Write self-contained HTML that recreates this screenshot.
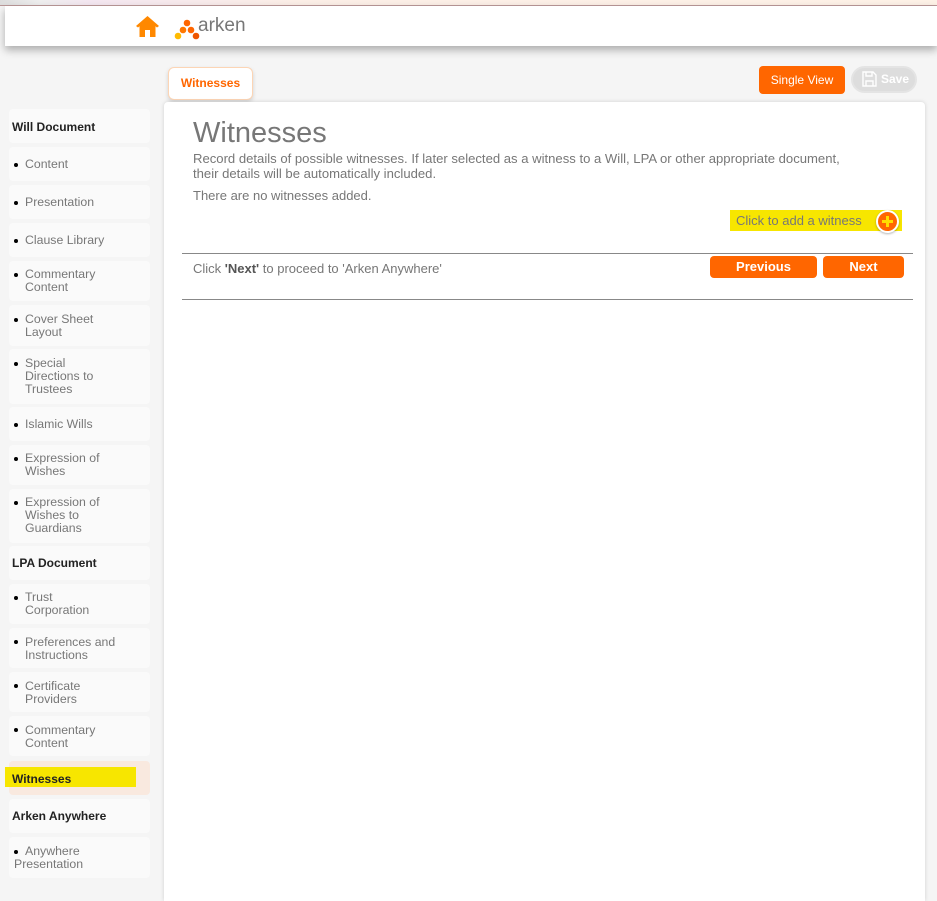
<!DOCTYPE html>
<html><head><meta charset="utf-8"><style>
*{margin:0;padding:0;box-sizing:border-box}
html,body{width:937px;height:901px;overflow:hidden}
body{background:#f5f5f5;font-family:"Liberation Sans",Arial,sans-serif;position:relative}
.strip{position:absolute;left:0;top:0;width:937px;height:6px;background:linear-gradient(90deg,#ddd 0,#eee 40px,#f3e6f0 90px,#fbeee6 300px,#fdf1e6 937px);border-bottom:1px solid #b99}
.hdr{position:absolute;left:5px;top:6px;width:932px;height:40px;background:#fff;box-shadow:0 4px 8px rgba(0,0,0,.3)}
.it{position:absolute;left:9px;width:141px;background:#fafafa;border-radius:4px;font-size:12.3px;color:#777;line-height:13px}
.it b{color:#222;position:absolute;left:3px;font-size:12px}
.it .t{position:absolute;left:16px}
.it .d{position:absolute;left:5px;width:4px;height:4px;border-radius:2px;background:#000}
.panel{position:absolute;left:164px;top:102px;width:761px;height:799px;background:#fff;border-radius:4px 4px 0 0;box-shadow:0 0 4px rgba(0,0,0,.15)}
.btn{position:absolute;background:#f60;color:#fff;border-radius:4px;font-size:13px;font-weight:bold;text-align:center}
</style></head><body>
<div class="strip"></div>
<div class="hdr">
<svg style="position:absolute;left:130px;top:8px" width="25" height="24" viewBox="0 0 25 24"><path d="M12.5 2 L1 12 L3 13.5 L4.5 12.3 V23 H10 V16 H15 V23 H20.5 V12.3 L22 13.5 L24 12Z" fill="#f80"/></svg>
<svg style="position:absolute;left:164px;top:4px" width="32" height="32"><circle cx="18" cy="13" r="3.3" fill="#f60"/><circle cx="14" cy="20" r="3.3" fill="#f70"/><circle cx="22" cy="20" r="3.3" fill="#f60"/><circle cx="9" cy="26" r="3.3" fill="#fb0"/><circle cx="27" cy="26" r="3.3" fill="#e50"/></svg>
<div style="position:absolute;left:193px;top:9px;font-size:19px;color:#777">arken</div>
</div>
<div style="position:absolute;left:168px;top:67px;width:85px;height:33px;background:#fff;border:1px solid #fcd5b5;border-radius:6px;box-shadow:0 2px 4px rgba(0,0,0,.15);color:#f60;font-size:12px;font-weight:bold;text-align:center;line-height:31px">Witnesses</div>
<div class="btn" style="left:759px;top:66px;width:86px;height:28px;line-height:28px;font-weight:normal;font-size:12px">Single View</div>
<div style="position:absolute;left:851px;top:66px;width:66px;height:27px;border:2px solid #e4e4e4;border-radius:14px;background:#ddd;color:#fff;font-size:12px;font-weight:bold;line-height:23px;padding-left:28px">Save
<svg style="position:absolute;left:9px;top:3px" width="15" height="16"><path d="M1 1H11L14 4V15H1Z M4 1V5H10V1 M4 15V10H11V15" fill="none" stroke="#fff" stroke-width="1.4"/></svg></div>

<div class="it" style="top:109px;height:34px"><b style="top:12px;left:3px">Will Document</b></div>
<div class="it" style="top:147px;height:34px"><span class="d" style="top:16px"></span><span class="t" style="top:11px">Content</span></div>
<div class="it" style="top:185px;height:34px"><span class="d" style="top:16px"></span><span class="t" style="top:11px">Presentation</span></div>
<div class="it" style="top:223px;height:34px"><span class="d" style="top:16px"></span><span class="t" style="top:11px">Clause Library</span></div>
<div class="it" style="top:261px;height:40px"><span class="d" style="top:12px"></span><span class="t" style="top:7px">Commentary<br>Content</span></div>
<div class="it" style="top:305px;height:41px"><span class="d" style="top:13px"></span><span class="t" style="top:8px">Cover Sheet<br>Layout</span></div>
<div class="it" style="top:349px;height:55px"><span class="d" style="top:13px"></span><span class="t" style="top:8px">Special<br>Directions to<br>Trustees</span></div>
<div class="it" style="top:407px;height:34px"><span class="d" style="top:16px"></span><span class="t" style="top:11px">Islamic Wills</span></div>
<div class="it" style="top:445px;height:40px"><span class="d" style="top:12px"></span><span class="t" style="top:7px">Expression of<br>Wishes</span></div>
<div class="it" style="top:489px;height:54px"><span class="d" style="top:12px"></span><span class="t" style="top:7px">Expression of<br>Wishes to<br>Guardians</span></div>
<div class="it" style="top:546px;height:34px"><b style="top:11px">LPA Document</b></div>
<div class="it" style="top:584px;height:40px"><span class="d" style="top:12px"></span><span class="t" style="top:7px">Trust<br>Corporation</span></div>
<div class="it" style="top:628px;height:40px"><span class="d" style="top:12px"></span><span class="t" style="top:8px">Preferences and<br>Instructions</span></div>
<div class="it" style="top:672px;height:40px"><span class="d" style="top:12px"></span><span class="t" style="top:8px">Certificate<br>Providers</span></div>
<div class="it" style="top:716px;height:40px"><span class="d" style="top:12px"></span><span class="t" style="top:8px">Commentary<br>Content</span></div>
<div class="it" style="top:761px;height:34px;background:#f9e9df"></div>
<div style="position:absolute;left:5px;top:767px;width:131px;height:20px;background:#f7e600"></div>
<div style="position:absolute;left:12px;top:772px;font-size:12px;font-weight:bold;color:#222">Witnesses</div>
<div class="it" style="top:799px;height:34px"><b style="top:11px">Arken Anywhere</b></div>
<div class="it" style="top:837px;height:41px"><span class="d" style="top:13px"></span><span class="t" style="top:8px">Anywhere</span><span style="position:absolute;left:5px;top:21px">Presentation</span></div>

<div class="panel"></div>
<div style="position:absolute;left:193px;top:117px;font-size:29px;color:#777">Witnesses</div>
<div style="position:absolute;left:193px;top:151px;font-size:13.1px;color:#777;line-height:15px">Record details of possible witnesses. If later selected as a witness to a Will, LPA or other appropriate document,<br>their details will be automatically included.</div>
<div style="position:absolute;left:193px;top:188px;font-size:13px;color:#777">There are no witnesses added.</div>
<div style="position:absolute;left:730px;top:210px;width:172px;height:21px;background:#f7e600;font-size:13px;color:#777;line-height:21px;padding-left:6px">Click to add a witness</div>
<div style="position:absolute;left:876px;top:210px;width:23px;height:23px;border-radius:50%;background:#f60;border:2px solid #fff;box-shadow:0 1px 2px rgba(0,0,0,.3)"><div style="position:absolute;left:4px;top:8px;width:11px;height:3px;background:#fd0"></div><div style="position:absolute;left:8px;top:4px;width:3px;height:11px;background:#fd0"></div></div>
<div style="position:absolute;left:182px;top:253px;width:731px;height:1px;background:#888"></div>
<div style="position:absolute;left:193px;top:261px;font-size:13px;color:#777">Click <b style="color:#555">'Next'</b> to proceed to 'Arken Anywhere'</div>
<div class="btn" style="left:710px;top:256px;width:107px;height:22px;line-height:22px">Previous</div>
<div class="btn" style="left:823px;top:256px;width:81px;height:22px;line-height:22px">Next</div>
<div style="position:absolute;left:182px;top:299px;width:731px;height:1px;background:#888"></div>
</body></html>
